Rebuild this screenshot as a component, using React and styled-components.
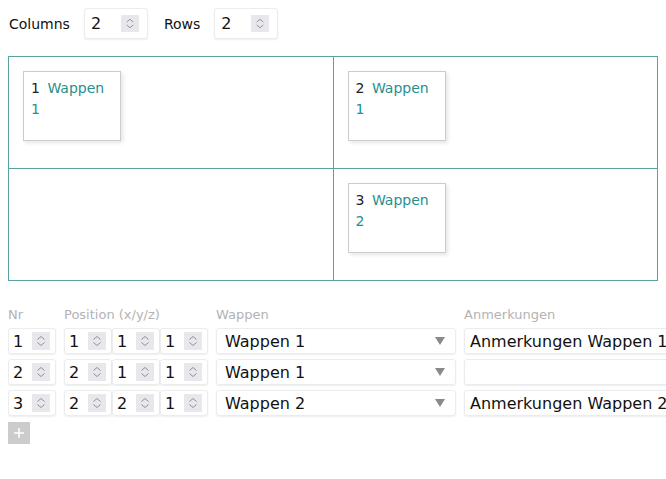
import styled, { createGlobalStyle } from 'styled-components'

const GlobalStyle = createGlobalStyle`
	html {
		overflow: hidden;
	}
	body {
		margin: 8px 0 8px 8px;
		font-family: 'DejaVu Sans', sans-serif;
		color: #111;
		background: #fff;
	}
`

const cards = [
	{ nr: 1, label: 'Wappen 1', cell: 0 },
	{ nr: 2, label: 'Wappen 1', cell: 1 },
	{ nr: 3, label: 'Wappen 2', cell: 3 },
]

const rows = [
	{ nr: 1, pos: [1, 1, 1], wappen: 'Wappen 1', note: 'Anmerkungen Wappen 1' },
	{ nr: 2, pos: [2, 1, 1], wappen: 'Wappen 1', note: '' },
	{ nr: 3, pos: [2, 2, 1], wappen: 'Wappen 2', note: 'Anmerkungen Wappen 2' },
]

const Spinner = ({ tall }) => (
	<SpinBox $tall={tall}>
		<svg width='18' height={tall ? 17 : 18} viewBox='0 0 18 18'>
			<polyline points='5.5,7.5 9,4.5 12.5,7.5' fill='none' stroke='#8f8f99' strokeWidth='1' />
			<polyline points='5.5,10.5 9,13.5 12.5,10.5' fill='none' stroke='#8f8f99' strokeWidth='1' />
		</svg>
	</SpinBox>
)

const NumberField = ({ value, big }) => (
	<NumBox $big={big}>
		<NumInput $big={big} type='text' defaultValue={value} />
		<Spinner tall={big} />
	</NumBox>
)

const App = () => {
	return (
		<Page>
			<GlobalStyle />
			<Toolbar>
				<Label>Columns</Label>
				<NumberField value={2} big />
				<Label $gap>Rows</Label>
				<NumberField value={2} big />
			</Toolbar>

			<Board>
				{[0, 1, 2, 3].map((cell) => (
					<Cell key={cell}>
						{cards
							.filter((c) => c.cell === cell)
							.map((c) => (
								<Card key={c.nr}>
									<CardNr>{c.nr}</CardNr> <CardLink>{c.label}</CardLink>
								</Card>
							))}
					</Cell>
				))}
			</Board>

			<Table>
				<HeadRow>
					<Head>Nr</Head>
					<Head>Position (x/y/z)</Head>
					<Head>Wappen</Head>
					<Head>Anmerkungen</Head>
				</HeadRow>
				{rows.map((r) => (
					<Row key={r.nr}>
						<NumberField value={r.nr} />
						<PosGroup>
							{r.pos.map((p, i) => (
								<NumberField key={i} value={p} />
							))}
						</PosGroup>
						<SelectBox>
							<Select defaultValue={r.wappen}>
								<option>Wappen 1</option>
								<option>Wappen 2</option>
							</Select>
							<svg width='10' height='8' viewBox='0 0 10 8'>
								<polygon points='0,0 10,0 5,8' fill='#8a8a8a' />
							</svg>
						</SelectBox>
						<TextBox type='text' defaultValue={r.note} />
					</Row>
				))}
				<AddButton>
					<svg width='22' height='22' viewBox='0 0 22 22'>
						<path d='M11 6v10M6 11h10' stroke='#fff' strokeWidth='1.5' />
					</svg>
				</AddButton>
			</Table>
		</Page>
	)
}

const Page = styled.div`
	width: 658px;
	overflow: hidden;
`

const Toolbar = styled.div`
	display: flex;
	align-items: center;
	height: 31px;
`

const Label = styled.span`
	font-size: 14px;
	margin-left: ${(p) => (p.$gap ? '16px' : '1px')};
	margin-right: 14px;
`

const NumBox = styled.div`
	display: flex;
	align-items: center;
	box-sizing: border-box;
	width: ${(p) => (p.$big ? '64px' : '48px')};
	height: ${(p) => (p.$big ? '31px' : '26px')};
	padding-right: ${(p) => (p.$big ? '8px' : '5px')};
	border: 1px solid #ececec;
	border-radius: 3px;
	box-shadow: 0 1px 2px rgba(0, 0, 0, 0.07);
	background: #fff;
`

const NumInput = styled.input`
	flex: 1;
	min-width: 0;
	width: 100%;
	border: none;
	outline: none;
	background: transparent;
	padding: 0 0 0 ${(p) => (p.$big ? '6px' : '4px')};
	font-family: 'DejaVu Sans', sans-serif;
	font-size: 16px;
	color: #111;
`

const SpinBox = styled.span`
	display: flex;
	width: 18px;
	height: ${(p) => (p.$tall ? '17px' : '18px')};
	background: #e7e7ec;
	flex-shrink: 0;
`

const Board = styled.div`
	display: grid;
	grid-template-columns: 1fr 1fr;
	width: 650px;
	box-sizing: border-box;
	margin-top: 17px;
	border-top: 1px solid #57a3a0;
	border-left: 1px solid #57a3a0;
`

const Cell = styled.div`
	box-sizing: border-box;
	height: 112px;
	padding: 14px;
	border-right: 1px solid #57a3a0;
	border-bottom: 1px solid #57a3a0;
`

const Card = styled.div`
	box-sizing: border-box;
	width: 98px;
	height: 70px;
	padding: 6px 6px 6px 7px;
	border: 1px solid #cccccc;
	box-shadow: 2px 2px 4px rgba(0, 0, 0, 0.1);
	font-size: 14px;
	line-height: 21px;
`

const CardNr = styled.span`
	color: #222;
	margin-right: 3px;
`

const CardLink = styled.span`
	color: #26908f;
`

const Table = styled.div`
	display: flex;
	flex-direction: column;
	gap: 5px;
	margin-top: 25px;
`

const columns = `
	display: grid;
	grid-template-columns: 48px 144px 240px 240px;
	column-gap: 8px;
	width: 696px;
`

const HeadRow = styled.div`
	${columns}
	margin-bottom: -1px;
`

const Head = styled.span`
	font-size: 13px;
	line-height: 18px;
	color: #b3b3b3;
`

const Row = styled.div`
	${columns}
	height: 26px;
`

const PosGroup = styled.div`
	display: flex;
`

const SelectBox = styled.div`
	display: flex;
	align-items: center;
	box-sizing: border-box;
	height: 26px;
	padding-right: 10px;
	border: 1px solid #ececec;
	border-radius: 3px;
	box-shadow: 0 1px 2px rgba(0, 0, 0, 0.07);
`

const Select = styled.select`
	flex: 1;
	appearance: none;
	border: none;
	outline: none;
	background: transparent;
	padding: 0 0 0 8px;
	font-family: 'DejaVu Sans', sans-serif;
	font-size: 16px;
	color: #111;
`

const TextBox = styled.input`
	box-sizing: border-box;
	width: 240px;
	height: 26px;
	padding: 0 5px;
	border: 1px solid #ececec;
	border-radius: 3px;
	box-shadow: 0 1px 2px rgba(0, 0, 0, 0.07);
	outline: none;
	font-family: 'DejaVu Sans', sans-serif;
	font-size: 16px;
	color: #111;
`

const AddButton = styled.button`
	display: flex;
	width: 22px;
	height: 22px;
	margin-top: 1px;
	padding: 0;
	border: none;
	background: #cccccc;
	cursor: pointer;
`

export default App
